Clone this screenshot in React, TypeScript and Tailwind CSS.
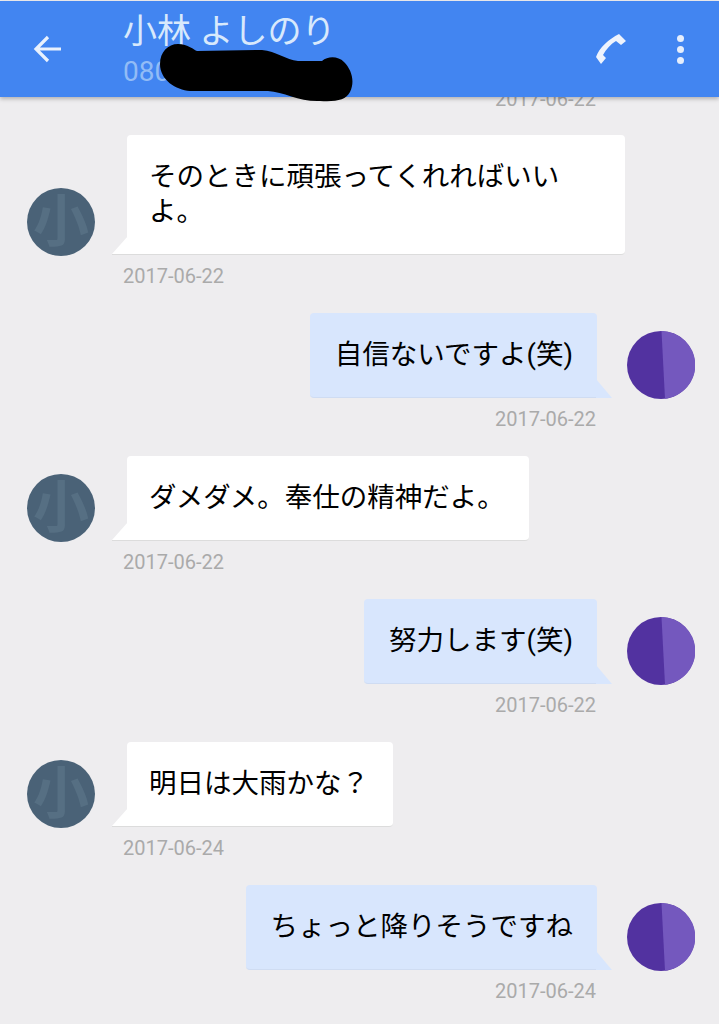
type Message = {
  from: "them" | "me";
  lines: string;
  date: string;
};

const messages: Message[] = [
  { from: "them", lines: "そのときに頑張ってくれればいいよ。", date: "2017-06-22" },
  { from: "me", lines: "自信ないですよ(笑)", date: "2017-06-22" },
  { from: "them", lines: "ダメダメ。奉仕の精神だよ。", date: "2017-06-22" },
  { from: "me", lines: "努力します(笑)", date: "2017-06-22" },
  { from: "them", lines: "明日は大雨かな？", date: "2017-06-24" },
  { from: "me", lines: "ちょっと降りそうですね", date: "2017-06-24" },
];

function TheirAvatar() {
  return (
    <div className="w-[68px] h-[68px] shrink-0 rounded-full bg-[#4a6277] flex items-center justify-center">
      <span className="text-[56px] leading-none font-bold text-[#566f83]">小</span>
    </div>
  );
}

function MyAvatar() {
  return (
    <svg width="68" height="68" viewBox="0 0 68 68" className="shrink-0">
      <circle cx="34" cy="34" r="34" fill="#5232a0" />
      <path d="M34.5 0 A34 34 0 0 1 38 67.8 Z" fill="#7458be" />
    </svg>
  );
}

function Bubble({ m }: { m: Message }) {
  if (m.from === "them") {
    return (
      <div className="relative max-w-[498px] bg-white rounded-t-[4px] rounded-br-[4px] border-b border-[#dcdcdc] pl-[22px] pr-[24px] pt-[24px] pb-[25px] leading-[35px]">
        <svg width="16" height="19" viewBox="0 0 16 19" className="absolute left-[-15px] bottom-[-1px]">
          <path d="M16 0 V18 H0 Z" fill="#ffffff" />
          <path d="M0 18 H16 V19 H0 Z" fill="#dcdcdc" />
        </svg>
        {m.lines}
      </div>
    );
  }
  return (
    <div className="relative bg-[#d8e6fd] rounded-t-[4px] rounded-bl-[4px] border-b border-[#cfdcf2] pl-[25px] pr-[24px] pt-[24px] pb-[25px] leading-[35px]">
      <svg width="16" height="19" viewBox="0 0 16 19" className="absolute right-[-15px] bottom-[-1px]">
        <path d="M0 0 V19 H16 Z" fill="#d8e6fd" />
      </svg>
      {m.lines}
    </div>
  );
}

function Row({ m }: { m: Message }) {
  if (m.from === "them") {
    return (
      <div>
        <div className="flex items-end gap-[32px] pl-[27px]">
          <div className="translate-y-[1px]">
            <TheirAvatar />
          </div>
          <Bubble m={m} />
        </div>
        <div className="mt-[10px] mb-[26px] h-[22px] pl-[123px] text-[20px] leading-[22px] text-[#aaaaaa]">{m.date}</div>
      </div>
    );
  }
  return (
    <div>
      <div className="flex items-end justify-end gap-[30px] pr-[24px]">
        <Bubble m={m} />
        <div className="translate-y-[1px]">
          <MyAvatar />
        </div>
      </div>
      <div className="mt-[10px] mb-[26px] h-[22px] pr-[123px] text-right text-[20px] leading-[22px] text-[#aaaaaa]">{m.date}</div>
    </div>
  );
}

export default function App() {
  return (
    <div className="relative w-[719px] h-[1024px] overflow-hidden bg-[#eeedef] font-['Roboto','Noto_Sans_CJK_JP',sans-serif] text-[27.5px] text-black">
      {/* ヘッダー */}
      <div className="relative z-10 h-[96px] mt-[1px] bg-[#4285f1] shadow-[0_2px_4px_rgba(0,0,0,0.25)] flex items-center">
        <svg width="30" height="28" viewBox="0 0 30 28" className="ml-[33px] shrink-0" fill="none" stroke="#e9f1fd" strokeWidth="3.2">
          <path d="M28 14 H3 M15 2 L3 14 L15 26" />
        </svg>
        <div className="ml-[60px] flex-1 self-start pt-[10px]">
          <div className="text-[34px] leading-[40px] text-[#d8e9fc]">小林 よしのり</div>
          <div className="text-[28px] leading-[30px] mt-[6px] text-[#92bcf6]">080</div>
        </div>
        <svg width="32" height="32" viewBox="0 0 32 32" className="shrink-0 mr-[50px]">
          <path d="M24 1 L31 8 L26 12 L21 8 C16 11 11 16 8 22 L11 25 L6 31 L1 24 C4 15 14 6 24 1 Z" fill="#eef3fd" />
        </svg>
        <div className="flex flex-col gap-[4px] mr-[35px] shrink-0">
          <div className="w-[7px] h-[7px] rounded-full bg-[#e6eefc]" />
          <div className="w-[7px] h-[7px] rounded-full bg-[#e6eefc]" />
          <div className="w-[7px] h-[7px] rounded-full bg-[#e6eefc]" />
        </div>
      </div>

      {/* 黒塗り */}
      <svg width="719" height="110" viewBox="0 0 719 110" className="absolute left-0 top-0 z-20">
        <path
          d="M160 64 C160 52 168 44 178 44 C188 44 194 50 197 51 L262 50 C276 51 286 60 298 61 L322 61 C328 56 338 56 344 62 C352 70 355 82 350 92 C346 100 336 102 320 101 C300 102 284 92 268 91 L190 91 C176 90 160 80 160 64 Z"
          fill="#000000"
        />
      </svg>

      {/* メッセージ */}
      <div className="mt-[-9px]">
        <div className="mb-[25px] h-[22px] pr-[123px] text-right text-[20px] leading-[22px] text-[#aaaaaa]">2017-06-22</div>
        {messages.map((m, i) => (
          <Row key={i} m={m} />
        ))}
      </div>
    </div>
  );
}
